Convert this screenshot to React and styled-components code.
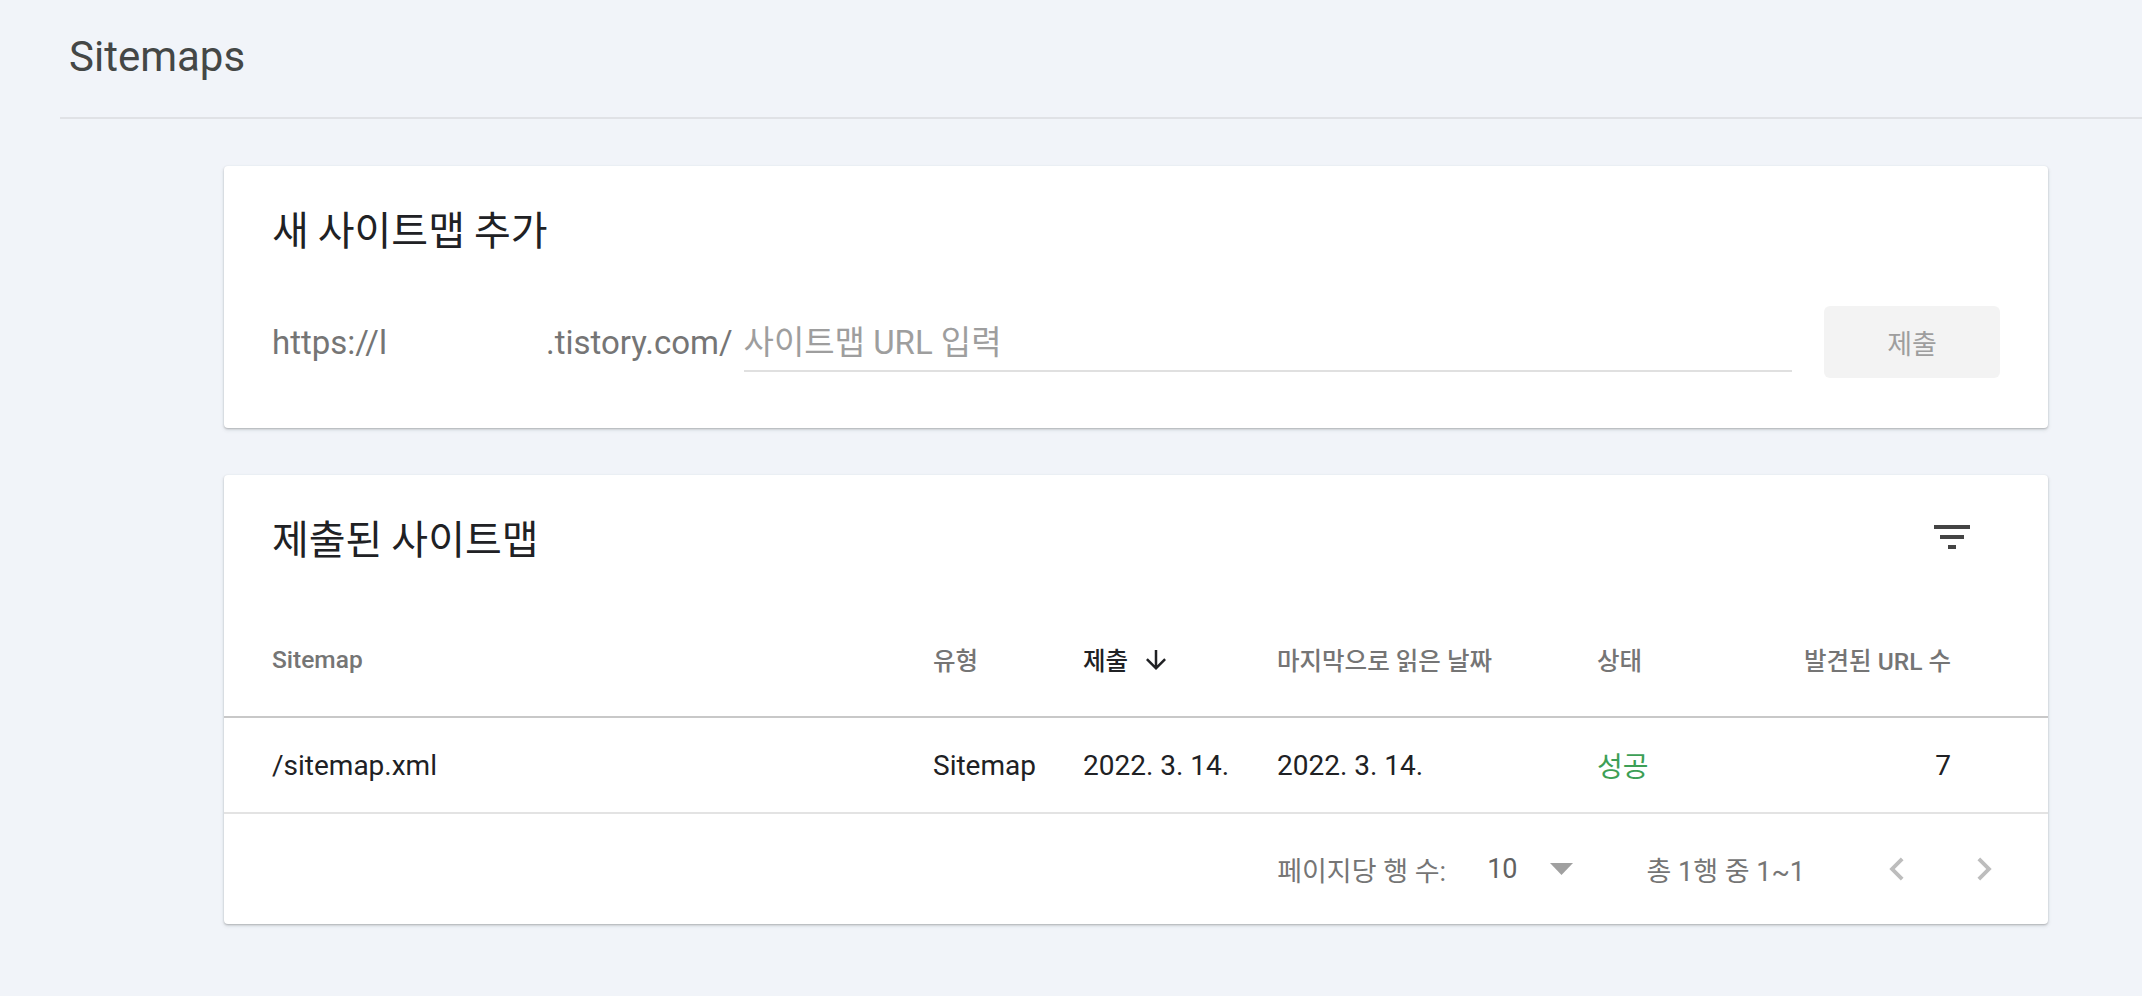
import styled, { createGlobalStyle } from 'styled-components';

const GlobalStyle = createGlobalStyle`
  html, body {
    margin: 0;
    padding: 0;
    background: #f1f4f9;
    font-family: Roboto, "Noto Sans CJK KR", sans-serif;
  }
`;

const Page = styled.div`
  min-height: 996px;
  background: #f1f4f9;
`;

const TopBar = styled.header`
  margin-left: 60px;
  height: 119px;
  padding: 33px 0 0 9px;
  box-sizing: border-box;
  border-bottom: 2px solid #e0e2e6;
`;

const PageTitle = styled.h1`
  margin: 0;
  font-family: Roboto, sans-serif;
  font-size: 42px;
  line-height: 48px;
  font-weight: 400;
  color: #444746;
`;

const Content = styled.main`
  width: 1824px;
  margin: 47px 0 0 224px;
  display: flex;
  flex-direction: column;
  gap: 47px;
`;

const Card = styled.section`
  background: #fff;
  border-radius: 4px;
  box-shadow: 0 1px 2px rgba(60, 64, 67, 0.3), 0 2px 4px rgba(60, 64, 67, 0.12);
`;

const CardHeader = styled.div`
  display: flex;
  align-items: center;
  justify-content: space-between;
  height: 48px;
  padding: 38px ${({ $right }) => $right || 48}px 0 48px;
`;

const CardTitle = styled.h2`
  margin: 0;
  font-family: "Noto Sans CJK KR", sans-serif;
  font-size: 40px;
  line-height: 48px;
  font-weight: 400;
  color: #202124;
`;

const UrlRow = styled.div`
  display: flex;
  align-items: center;
  height: 72px;
  margin-top: 54px;
  padding: 0 48px 50px 48px;
`;

const Prefix = styled.span`
  font-family: Roboto, sans-serif;
  font-size: 33px;
  color: #757575;
  white-space: nowrap;
  display: flex;
  align-items: center;
`;

const Redacted = styled.span`
  display: inline-block;
  width: 159px;
  height: 40px;
  background: #fff;
`;

const UrlInput = styled.input`
  flex: 1;
  margin-left: 11px;
  height: 56px;
  margin-top: 2px;
  border: none;
  border-bottom: 2px solid #e0e0e0;
  outline: none;
  padding: 0;
  font-family: Roboto, "Noto Sans CJK KR", sans-serif;
  font-size: 33px;
  color: #202124;
  background: transparent;

  &::placeholder {
    color: #9e9e9e;
  }
`;

const SubmitButton = styled.button`
  margin-left: 32px;
  width: 176px;
  height: 72px;
  border: none;
  border-radius: 6px;
  background: #f3f3f3;
  color: #9e9e9e;
  font-family: "Noto Sans CJK KR", sans-serif;
  font-size: 27px;
`;

const IconButton = styled.span`
  display: flex;
  align-items: center;
  justify-content: center;
  width: ${({ $size }) => $size}px;
  height: ${({ $size }) => $size}px;
  color: ${({ $color }) => $color};
  margin-left: ${({ $gap }) => $gap || 0}px;
`;

const columns = '661px 150px 194px 320px 1fr auto';

const HeadRow = styled.div`
  display: grid;
  grid-template-columns: ${columns};
  align-items: center;
  height: 113px;
  margin-top: 42px;
  padding: 0 97px 0 48px;
  border-bottom: 2px solid #c8c8c8;
`;

const HeadCell = styled.div`
  display: flex;
  align-items: center;
  justify-content: ${({ $end }) => ($end ? 'flex-end' : 'flex-start')};
  font-family: Roboto, "Noto Sans CJK KR", sans-serif;
  font-size: 24.5px;
  font-weight: 500;
  color: ${({ $active }) => ($active ? '#202124' : '#757575')};
`;

const BodyRow = styled.div`
  display: grid;
  grid-template-columns: ${columns};
  align-items: center;
  height: 94px;
  padding: 0 97px 0 48px;
  border-bottom: 2px solid #e3e3e3;
`;

const Cell = styled.div`
  font-family: Roboto, "Noto Sans CJK KR", sans-serif;
  font-size: 28px;
  color: ${({ $ok }) => ($ok ? '#3d9f56' : '#202124')};
  text-align: ${({ $end }) => ($end ? 'right' : 'left')};
`;

const Footer = styled.div`
  display: flex;
  align-items: center;
  justify-content: flex-end;
  height: 110px;
  padding-right: 41px;
`;

const FooterText = styled.span`
  font-family: Roboto, "Noto Sans CJK KR", sans-serif;
  font-size: 27px;
  color: ${({ $dark }) => ($dark ? '#616161' : '#757575')};
  margin-left: ${({ $gap }) => $gap || 0}px;
  white-space: nowrap;
`;

const FilterIcon = () => (
  <svg width="48" height="48" viewBox="0 0 24 24" fill="currentColor">
    <path d="M10 18h4v-2h-4v2zM3 6v2h18V6H3zm3 7h12v-2H6v2z" />
  </svg>
);

const ArrowDown = () => (
  <svg width="30" height="30" viewBox="0 0 24 24" fill="currentColor">
    <path d="M20 12l-1.41-1.41L13 16.17V4h-2v12.17l-5.58-5.59L4 12l8 8 8-8z" />
  </svg>
);

const ChevronLeft = () => (
  <svg width="46" height="46" viewBox="0 0 24 24" fill="currentColor">
    <path d="M15.41 7.41L14 6l-6 6 6 6 1.41-1.41L10.83 12z" />
  </svg>
);

const ChevronRight = () => (
  <svg width="46" height="46" viewBox="0 0 24 24" fill="currentColor">
    <path d="M10 6L8.59 7.41 13.17 12l-4.58 4.59L10 18l6-6z" />
  </svg>
);

const DropTriangle = () => (
  <svg width="23" height="12" viewBox="0 0 23 12" fill="currentColor">
    <path d="M0 0h23L11.5 12z" />
  </svg>
);

const sitemaps = [
  { path: '/sitemap.xml', type: 'Sitemap', submitted: '2022. 3. 14.', lastRead: '2022. 3. 14.', status: '성공', urls: 7 },
];

export default function App() {
  return (
    <Page>
      <GlobalStyle />
      <TopBar>
        <PageTitle>Sitemaps</PageTitle>
      </TopBar>

      <Content>
        <Card>
          <CardHeader>
            <CardTitle>새 사이트맵 추가</CardTitle>
          </CardHeader>
          <UrlRow>
            <Prefix>
              https://l<Redacted />.tistory.com/
            </Prefix>
            <UrlInput placeholder="사이트맵 URL 입력" />
            <SubmitButton>제출</SubmitButton>
          </UrlRow>
        </Card>

        <Card>
          <CardHeader $right={72}>
            <CardTitle>제출된 사이트맵</CardTitle>
            <IconButton $size={48} $color="#444">
              <FilterIcon />
            </IconButton>
          </CardHeader>

          <HeadRow>
            <HeadCell>Sitemap</HeadCell>
            <HeadCell>유형</HeadCell>
            <HeadCell $active>
              제출
              <IconButton $size={30} $color="#202124" $gap={13}>
                <ArrowDown />
              </IconButton>
            </HeadCell>
            <HeadCell>마지막으로 읽은 날짜</HeadCell>
            <HeadCell>상태</HeadCell>
            <HeadCell $end>발견된 URL 수</HeadCell>
          </HeadRow>

          {sitemaps.map((s) => (
            <BodyRow key={s.path}>
              <Cell>{s.path}</Cell>
              <Cell>{s.type}</Cell>
              <Cell>{s.submitted}</Cell>
              <Cell>{s.lastRead}</Cell>
              <Cell $ok>{s.status}</Cell>
              <Cell $end>{s.urls}</Cell>
            </BodyRow>
          ))}

          <Footer>
            <FooterText>페이지당 행 수:</FooterText>
            <FooterText $dark $gap={41}>10</FooterText>
            <IconButton $size={23} $color="#a0a0a0" $gap={32}>
              <DropTriangle />
            </IconButton>
            <FooterText $gap={74}>총 1행 중 1~1</FooterText>
            <IconButton $size={46} $color="#bdbdbd" $gap={69}>
              <ChevronLeft />
            </IconButton>
            <IconButton $size={46} $color="#bdbdbd" $gap={41}>
              <ChevronRight />
            </IconButton>
          </Footer>
        </Card>
      </Content>
    </Page>
  );
}
